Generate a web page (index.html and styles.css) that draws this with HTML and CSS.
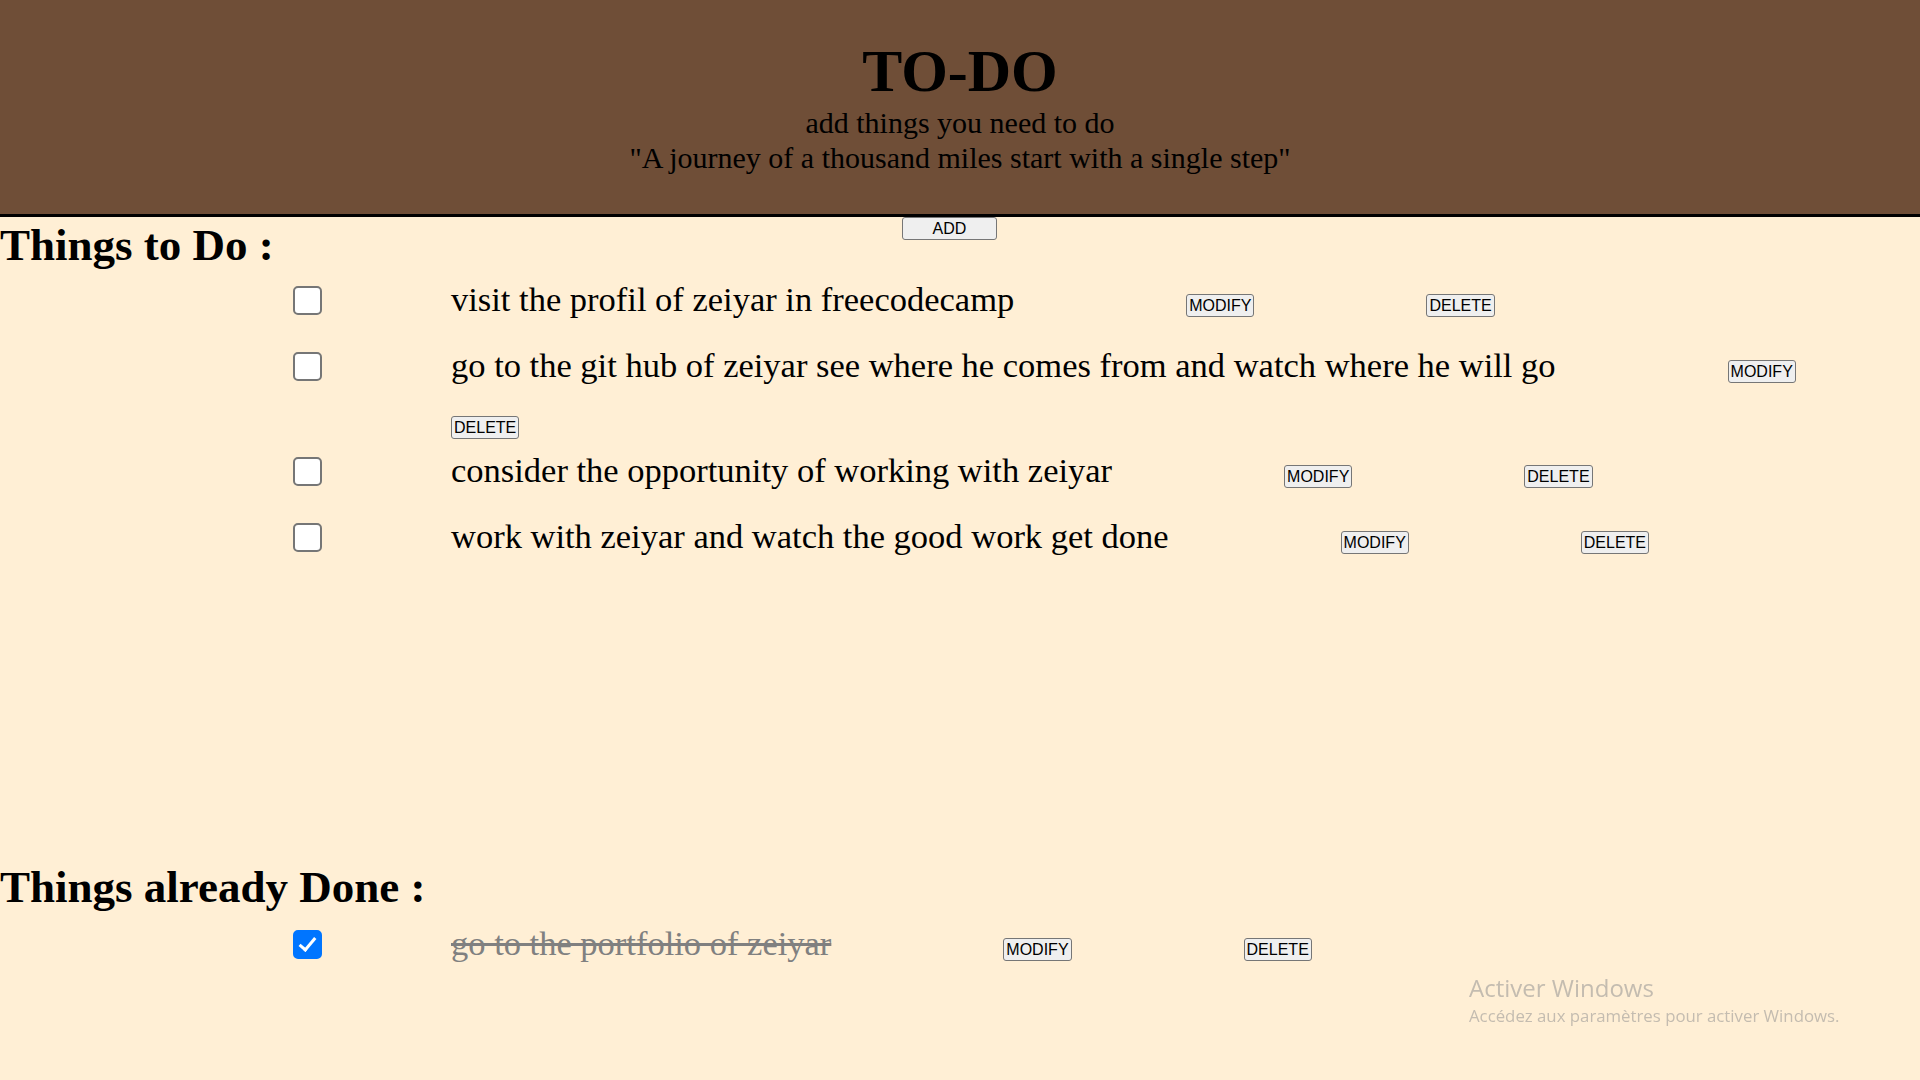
FILE: index.html
```html
<!DOCTYPE html>
<html lang="en">
<head>
<meta charset="utf-8">
<title>TO-DO</title>
<link rel="stylesheet" href="styles.css">
</head>
<body>
<header class="top">
  <h1 class="title">TO-DO</h1>
  <p class="sub">add things you need to do</p>
  <p class="sub">"A journey of a thousand miles start with a single step"</p>
</header>

<section class="todo">
  <div class="list-head">
    <h2 class="section-title">Things to Do :</h2>
    <button class="btn btn-add" type="button">ADD</button>
  </div>
  <ul class="items">
    <li class="item">
      <input class="check" type="checkbox">
      <div class="item-body">
        <span class="item-text">visit the profil of zeiyar in freecodecamp</span>
        <button class="btn btn-small" type="button">MODIFY</button>
        <button class="btn btn-small" type="button">DELETE</button>
      </div>
    </li>
    <li class="item">
      <input class="check" type="checkbox">
      <div class="item-body">
        <span class="item-text">go to the git hub of zeiyar see where he comes from and watch where he will go</span>
        <button class="btn btn-small" type="button">MODIFY</button>
        <button class="btn btn-small" type="button">DELETE</button>
      </div>
    </li>
    <li class="item">
      <input class="check" type="checkbox">
      <div class="item-body">
        <span class="item-text">consider the opportunity of working with zeiyar</span>
        <button class="btn btn-small" type="button">MODIFY</button>
        <button class="btn btn-small" type="button">DELETE</button>
      </div>
    </li>
    <li class="item">
      <input class="check" type="checkbox">
      <div class="item-body">
        <span class="item-text">work with zeiyar and watch the good work get done</span>
        <button class="btn btn-small" type="button">MODIFY</button>
        <button class="btn btn-small" type="button">DELETE</button>
      </div>
    </li>
  </ul>
</section>

<section class="done">
  <h2 class="section-title">Things already Done :</h2>
  <ul class="items items-done">
    <li class="item">
      <input class="check" type="checkbox" checked>
      <div class="item-body">
        <span class="item-text item-text-done">go to the portfolio of zeiyar</span>
        <button class="btn btn-small" type="button">MODIFY</button>
        <button class="btn btn-small" type="button">DELETE</button>
      </div>
    </li>
  </ul>
</section>

<div class="watermark">
  <div class="wm-title">Activer Windows</div>
  <div class="wm-sub">Accédez aux paramètres pour activer Windows.</div>
</div>
</body>
</html>
```

FILE: styles.css
```css
html, body {
  margin: 0;
  padding: 0;
}

body {
  background: #ffefd5;
  color: #000;
  font-family: "Liberation Serif", "Times New Roman", serif;
}

.top {
  background: #6f4e37;
  text-align: center;
  padding: 37px 0 39px;
  border-bottom: 3px solid #000;
}

.title {
  margin: 0;
  font-size: 60px;
  font-weight: bold;
  line-height: 69px;
}

.sub {
  margin: 0;
  font-size: 30px;
  line-height: 34.5px;
}

.todo {
  box-sizing: border-box;
  min-height: 644px;
}

.list-head {
  display: grid;
  grid-template-columns: 902px auto;
  align-items: start;
}

.section-title {
  margin: 2px 0 0;
  font-size: 45px;
  font-weight: bold;
  line-height: 52px;
}

.done .section-title {
  margin: 0;
}

.btn {
  font-family: "Liberation Sans", Arial, sans-serif;
  font-size: 16px;
  line-height: 19px;
  color: #000;
  background: #efefef;
  border: 1px solid #767676;
  border-radius: 3px;
  padding: 1px 2px;
  margin: 0;
}

.btn-add {
  width: 95px;
  justify-self: start;
}

.items {
  list-style: none;
  margin: 7.5px 0 0;
  padding: 0 0 0 293px;
  display: flex;
  flex-direction: column;
  gap: 26px;
}

.items-done {
  margin-top: 10px;
}

.item {
  display: flex;
  align-items: flex-start;
}

.check {
  -webkit-appearance: none;
  appearance: none;
  position: relative;
  flex: none;
  box-sizing: border-box;
  width: 29px;
  height: 29px;
  margin: 7.4px 129px 0 0;
  background: #fff;
  border: 2.5px solid #767676;
  border-radius: 5px;
}

.check:checked {
  background: #0075ff;
  border-color: #0075ff;
}

.check:checked::after {
  content: "";
  position: absolute;
  left: 8px;
  top: 2px;
  width: 6px;
  height: 14px;
  border-right: 3.5px solid #fff;
  border-bottom: 3.5px solid #fff;
  transform: rotate(40deg);
}

.item-body {
  flex: 1;
  display: flex;
  flex-wrap: wrap;
  align-items: baseline;
  column-gap: 172px;
  row-gap: 31.5px;
}

.item-text {
  font-size: 34.5px;
  line-height: 40px;
}

.item-text-done {
  color: #808080;
  text-decoration: line-through;
}

.btn-small {
  margin-bottom: -15px;
}

.watermark {
  position: fixed;
  left: 1469px;
  top: 972px;
  color: #c4bcb0;
  font-family: "Open Sans", "Noto Sans", sans-serif;
  pointer-events: none;
}

.wm-title {
  font-size: 24px;
  line-height: 31px;
}

.wm-sub {
  font-size: 16.8px;
  line-height: 23px;
  margin-top: 1px;
}
```
